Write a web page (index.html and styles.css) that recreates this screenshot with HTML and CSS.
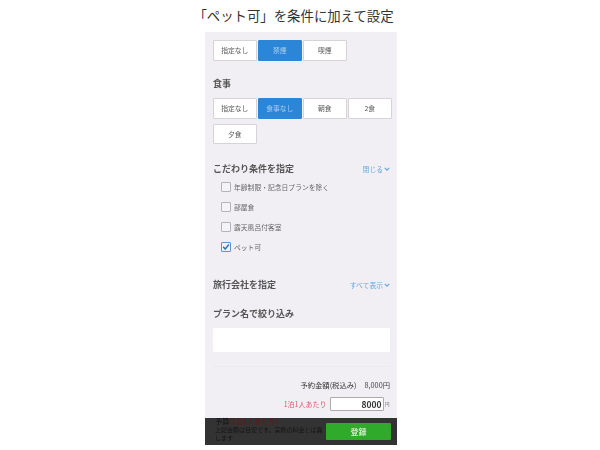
FILE: index.html
```html
<!DOCTYPE html>
<html lang="ja">
<head>
<meta charset="utf-8">
<title>ペット可</title>
<link rel="stylesheet" href="styles.css">
</head>
<body>
<h1 class="title">「ペット可」を条件に加えて設定</h1>
<main class="panel">
  <div class="btn-grid">
    <span class="opt">指定なし</span><span class="opt on">禁煙</span><span class="opt">喫煙</span>
  </div>
  <h2 class="head meal-head">食事</h2>
  <div class="btn-grid">
    <span class="opt">指定なし</span><span class="opt on">食事なし</span><span class="opt">朝食</span><span class="opt">2食</span><span class="opt">夕食</span>
  </div>
  <div class="row-head pref-head">
    <h2 class="head">こだわり条件を指定</h2>
    <span class="link">閉じる<svg class="chev" viewBox="0 0 8 5"><path d="M1 1l3 3 3-3" fill="none" stroke="currentColor" stroke-width="1.6"/></svg></span>
  </div>
  <ul class="checks">
    <li><span class="box"></span>年齢制限・記念日プランを除く</li>
    <li><span class="box"></span>部屋食</li>
    <li><span class="box"></span>露天風呂付客室</li>
    <li><span class="box checked"><svg viewBox="0 0 14 14"><path d="M2 6.5l3.6 4L12 2.5" fill="none" stroke="#2f78c4" stroke-width="2.6"/></svg></span>ペット可</li>
  </ul>
  <div class="row-head agent-head">
    <h2 class="head">旅行会社を指定</h2>
    <span class="link">すべて表示<svg class="chev" viewBox="0 0 8 5"><path d="M1 1l3 3 3-3" fill="none" stroke="currentColor" stroke-width="1.6"/></svg></span>
  </div>
  <h2 class="head plan-head">プラン名で絞り込み</h2>
  <div class="plan-input"></div>
  <div class="rule"></div>
  <div class="price"><span>予約金額(税込み)</span><span class="amount">8,000円</span></div>
  <div class="per"><span class="per-label">1泊1人あたり</span><span class="per-input">8000</span><span class="yen">円</span></div>
  <div class="bar"><span class="submit">登録</span></div>
  <div class="under">
    <div class="under-title">予算<span class="red">(1泊1人あたり)</span></div>
    <div class="under-line">上記金額は目安です。実際の料金とは異</div>
    <div class="under-line">します</div>
  </div>
</main>
</body>
</html>
```
FILE: styles.css
```css
* { box-sizing: border-box; }
html, body { margin: 0; padding: 0; }
body {
  width: 600px;
  height: 450px;
  background: #fff;
  overflow: hidden;
  font-family: "Noto Sans CJK JP", "Noto Sans", sans-serif;
  color: #444;
  display: flex;
  flex-direction: column;
  align-items: center;
}
.title {
  margin: 0;
  height: 32px;
  line-height: 30px;
  font-size: 13.4px;
  font-weight: 400;
  color: #333;
  width: 400px;
  text-align: center;
  padding-right: 13px;
}
.panel {
  position: relative;
  width: 192px;
  height: 413px;
  margin-left: 2px;
  background: #f1eff3;
  padding: 8px 7px 0 8px;
  overflow: hidden;
  filter: blur(0.35px);
}
.btn-grid {
  display: grid;
  grid-template-columns: repeat(4, 43.5px);
  column-gap: 1.5px;
  row-gap: 5px;
}
.opt {
  height: 20.5px;
  background: #fff;
  border: 1px solid #d5d3d6;
  border-radius: 1px;
  font-size: 6.8px;
  line-height: 18.5px;
  text-align: center;
  color: #555;
}
.opt.on { background: #2c86d8; border-color: #2c86d8; color: #a9d0f3; }
.head {
  margin: 0;
  font-size: 9px;
  line-height: 14px;
  font-weight: 700;
  color: #555;
}
.meal-head { margin-top: 16px; margin-bottom: 7.5px; }
.row-head { display: flex; justify-content: space-between; align-items: center; }
.pref-head { margin-top: 17.5px; }
.agent-head { margin-top: 21px; }
.link { font-size: 6.8px; color: #69a7e0; display: flex; align-items: center; gap: 1px; }
.chev { width: 6px; height: 4px; }
.checks { list-style: none; margin: 1px 0 0; padding: 0 0 0 8px; }
.checks li {
  display: flex;
  align-items: center;
  gap: 3px;
  height: 20px;
  font-size: 6.8px;
  color: #666;
}
.box {
  width: 10px;
  height: 10px;
  background: #f4f3f5;
  border: 1px solid #b5b3b6;
  border-radius: 1px;
  display: block;
  flex: none;
}
.box.checked { background: #eef3fa; border-color: #5d94cf; }
.box svg { display: block; width: 100%; height: 100%; }
.plan-head { margin-top: 15px; }
.plan-input { height: 24px; margin-top: 7px; background: #fff; border-radius: 1px; }
.rule { height: 1px; margin-top: 14px; background: #eceaee; }
.price {
  margin-top: 12px;
  display: flex;
  justify-content: flex-end;
  gap: 8px;
  font-size: 7.3px;
  line-height: 12px;
  color: #333;
}
.amount { color: #444; }
.per { margin-top: 6px; display: flex; justify-content: flex-end; align-items: center; height: 14px; }
.per-label { font-size: 7px; color: #e0586c; margin-right: 3px; }
.per-input {
  width: 54px;
  height: 14px;
  background: #fff;
  border: 1px solid #aaa;
  border-radius: 1px;
  font-size: 8.5px;
  line-height: 12px;
  font-weight: 700;
  text-align: right;
  padding-right: 1px;
  color: #333;
}
.yen { font-size: 4.5px; margin-left: 1.5px; width: 5px; color: #666; }
.under { position: absolute; left: 10px; top: 385px; width: 112px; }
.under-title { font-size: 7.2px; line-height: 9px; color: #111; white-space: nowrap; }
.under-line { font-size: 6px; line-height: 8px; color: #151515; white-space: nowrap; }
.red { color: #6a1414; }
.bar {
  position: absolute;
  left: 0;
  right: 0;
  bottom: 0;
  height: 27px;
  background: #333;
  display: flex;
  justify-content: flex-end;
  align-items: center;
  padding-right: 6px;
}
.submit {
  width: 65px;
  height: 17px;
  background: #2faa2a;
  border-radius: 1px;
  color: #cfeccc;
  font-size: 8px;
  font-weight: 700;
  line-height: 17px;
  text-align: center;
}
```
